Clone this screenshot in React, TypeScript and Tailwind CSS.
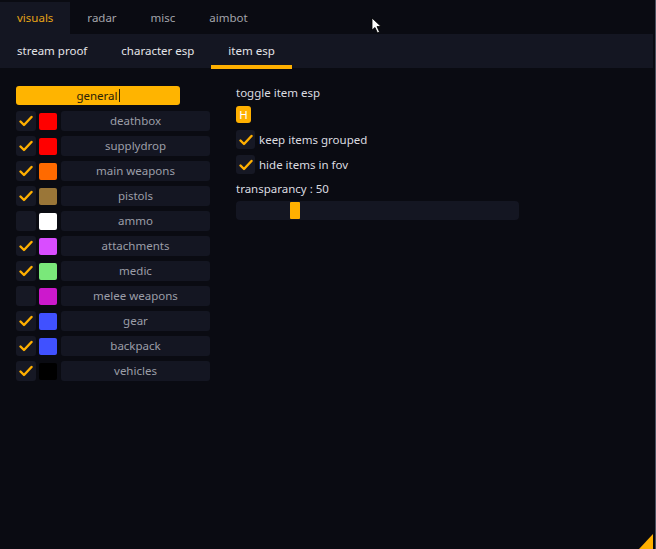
import React from 'react';

interface Item {
  name: string;
  color: string;
  checked: boolean;
}

const items: Item[] = [
  { name: 'deathbox', color: '#ff0000', checked: true },
  { name: 'supplydrop', color: '#ff0000', checked: true },
  { name: 'main weapons', color: '#ff6a00', checked: true },
  { name: 'pistols', color: '#9a7638', checked: true },
  { name: 'ammo', color: '#ffffff', checked: false },
  { name: 'attachments', color: '#d94dff', checked: true },
  { name: 'medic', color: '#7ae87a', checked: true },
  { name: 'melee weapons', color: '#cc19cc', checked: false },
  { name: 'gear', color: '#4051ff', checked: true },
  { name: 'backpack', color: '#4051ff', checked: true },
  { name: 'vehicles', color: '#000000', checked: true },
];

const topTabs = ['visuals', 'radar', 'misc', 'aimbot'];
const subTabs = ['stream proof', 'character esp', 'item esp'];

function Check({ on, size }: { on: boolean; size: string }) {
  return (
    <div className={`${size} shrink-0 rounded-[3px] bg-[#161824] flex items-center justify-center`}>
      {on && (
        <svg width="14" height="12" viewBox="0 0 14 12">
          <path d="M1.5 6.5 L5 10 L12.5 2" fill="none" stroke="#ffb000" strokeWidth="2.4" strokeLinecap="round" strokeLinejoin="round" />
        </svg>
      )}
    </div>
  );
}

export default function App() {
  return (
    <div
      className="relative w-[656px] h-[549px] overflow-hidden bg-[#0a0b12] text-[11.5px]"
      style={{ fontFamily: '"Noto Sans", "Open Sans", sans-serif' }}
    >
      {/* top tabs */}
      <div className="flex h-[34px] items-end">
        {topTabs.map((t, i) => (
          <div
            key={t}
            className={`h-[32px] px-[17px] flex items-center ${
              i === 0 ? 'bg-[#141622] text-[#e6a417]' : 'text-[#a3a4ab]'
            }`}
          >
            {t}
          </div>
        ))}
      </div>

      {/* sub tabs */}
      <div className="flex h-[34px] w-[653px] bg-[#141622]">
        {subTabs.map((t, i) => (
          <div key={t} className="relative h-full px-[17px] flex items-center text-[#e4e4e8]">
            {t}
            {i === 2 && <div className="absolute left-0 right-0 bottom-[-1px] h-[4px] bg-[#ffb000]" />}
          </div>
        ))}
      </div>

      <div className="flex pt-[18px] pl-[16px]">
        {/* left column */}
        <div className="w-[194px] flex flex-col gap-[5px]">
          <div className="h-[19px] w-[164px] mb-[1px] rounded-[3px] bg-[#ffb400] text-[#2b2108] flex items-center justify-center">
            general<span className="ml-[1px] w-[1px] h-[13px] bg-[#2b2108]" />
          </div>
          {items.map((it) => (
            <div key={it.name} className="flex items-center h-[20px]">
              <Check on={it.checked} size="w-[20px] h-[20px]" />
              <div className="ml-[3px] w-[18px] h-[17px] rounded-[2px]" style={{ backgroundColor: it.color }} />
              <div className="ml-[4px] flex-1 h-[20px] rounded-[3px] bg-[#141622] text-[#9c9ea8] flex items-center justify-center">
                {it.name}
              </div>
            </div>
          ))}
        </div>

        {/* right column */}
        <div className="ml-[26px] flex flex-col text-[#dcdce0]">
          <div className="h-[14px] flex items-center">toggle item esp</div>
          <div className="mt-[6px] w-[15px] h-[17px] rounded-[3px] bg-[#ffb000] text-white flex items-center justify-center">
            H
          </div>
          <div className="mt-[7px] flex items-center gap-[4px]">
            <Check on size="w-[19px] h-[19px]" />
            keep items grouped
          </div>
          <div className="mt-[6px] flex items-center gap-[4px]">
            <Check on size="w-[19px] h-[19px]" />
            hide items in fov
          </div>
          <div className="mt-[8px] h-[14px] flex items-center">transparancy : 50</div>
          <div className="mt-[5px] w-[283px] h-[19px] rounded-[4px] bg-[#141622] relative">
            <div className="absolute left-[54px] top-[1px] w-[10px] h-[17px] bg-[#ffb000] rounded-[1px]" />
          </div>
        </div>
      </div>

      {/* mouse cursor */}
      <svg className="absolute left-[371px] top-[17px]" width="12" height="17" viewBox="0 0 12 17">
        <path d="M1 1 L1 13 L4 10.5 L6.5 16 L8.5 15 L6 9.5 L10 9.5 Z" fill="#ffffff" stroke="#000" strokeWidth="0.8" />
      </svg>

      {/* resize grip */}
      <svg className="absolute right-[3px] bottom-0" width="14" height="15" viewBox="0 0 14 15">
        <path d="M14 0 L14 15 L0 15 Z" fill="#ffb000" />
      </svg>

      <div className="absolute right-0 top-0 bottom-0 w-[1px] bg-[#4a505e]" />
    </div>
  );
}
